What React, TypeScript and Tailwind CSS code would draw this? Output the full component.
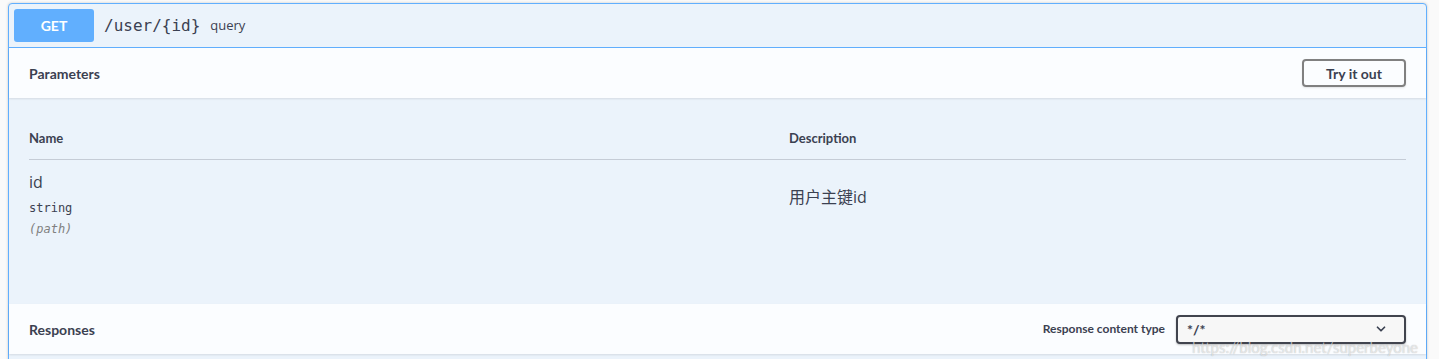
import { ChevronDown } from 'lucide-react';

const SANS = "font-['Lato','Open_Sans','Liberation_Sans',sans-serif]";
const BODY = "font-['Open_Sans','Noto_Sans_CJK_SC',sans-serif]";
const MONO = "font-['DejaVu_Sans_Mono','Liberation_Mono',monospace]";

export default function App() {
  return (
    <div className="relative h-[359px] overflow-hidden bg-[#fafafa] pl-2 pr-3 pt-[3px] text-[#3b4151]">
      <div className="rounded-[4px] border border-[#61affe] bg-[#ebf3fb] shadow-[0_0_3px_rgba(0,0,0,0.19)]">
        {/* Summary */}
        <div className="flex items-center border-b border-[#61affe] px-[5px] py-[5px]">
          <span
            className={`flex h-[33px] w-[80px] items-center justify-center rounded-[3px] bg-[#61affe] text-[14px] font-bold text-white ${SANS}`}
          >
            GET
          </span>
          <span className={`ml-[10px] text-[16px] text-[#3b4151] ${MONO}`}>/user/&#123;id&#125;</span>
          <span className={`ml-[10px] text-[13px] text-[#3b4151] ${BODY}`}>query</span>
        </div>

        {/* Parameters header */}
        <div className="flex h-[50px] items-center justify-between bg-[#fbfdff] px-5 shadow-[0_1px_2px_rgba(0,0,0,0.1)]">
          <h4 className={`text-[14px] font-bold ${SANS}`}>Parameters</h4>
          <button
            className={`h-[28px] w-[104px] rounded-[4px] border-2 border-[#808080] bg-transparent text-[14px] font-bold shadow-[0_1px_2px_rgba(0,0,0,0.1)] ${SANS}`}
          >
            Try it out
          </button>
        </div>

        {/* Parameters table */}
        <div className="h-[206px] px-5 pt-5">
          <div className={`flex h-[42px] items-center border-b border-[#c5ccd6] text-[13px] font-bold ${SANS}`}>
            <span className="w-[760px]">Name</span>
            <span>Description</span>
          </div>
          <div className="flex">
            <div className="w-[760px] pt-[11px]">
              <div className={`text-[16px] leading-[22px] text-[#3b4151] ${BODY}`}>id</div>
              <div className={`mt-[7px] text-[12px] leading-[16px] ${MONO}`}>string</div>
              <div className={`mt-[5px] text-[12px] leading-[16px] italic text-[#808080] ${MONO}`}>(path)</div>
            </div>
            <div className={`pt-[26px] text-[16px] leading-[22px] ${BODY}`}>用户主键id</div>
          </div>
        </div>

        {/* Responses header */}
        <div className="flex h-[50px] items-center justify-between bg-[#fbfdff] px-5 shadow-[0_1px_2px_rgba(0,0,0,0.1)]">
          <h4 className={`text-[14px] font-bold ${SANS}`}>Responses</h4>
          <div className="flex items-center">
            <span className={`mr-[11px] text-[12px] font-bold ${SANS}`}>Response content type</span>
            <div
              className={`flex h-[29px] w-[230px] items-center justify-between rounded-[4px] border-2 border-[#41444e] bg-[#f7f7f7] pl-[9px] pr-[16px] text-[14px] font-bold shadow-[0_1px_2px_rgba(0,0,0,0.25)] ${SANS}`}
            >
              <span>*/*</span>
              <ChevronDown className="h-3.5 w-3.5" strokeWidth={3} />
            </div>
          </div>
        </div>
        <div className="h-[20px]" />
      </div>

      {/* Watermark */}
      <span
        className={`absolute left-[1192px] top-[336px] text-[15px] text-white/60 [text-shadow:0_0_1px_rgba(0,0,0,0.3)] ${SANS}`}
      >
        https://blog.csdn.net/superbeyone
      </span>
    </div>
  );
}
